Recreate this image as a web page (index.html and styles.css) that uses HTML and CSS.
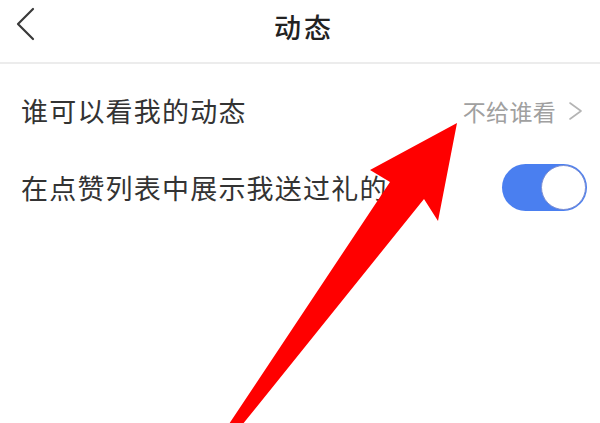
FILE: index.html
```html
<!DOCTYPE html>
<html lang="zh-CN">
<head>
<meta charset="utf-8">
<title>动态</title>
<link rel="stylesheet" href="styles.css">
</head>
<body>
<div class="page">
  <header class="topbar">
    <svg class="back" width="20" height="34" viewBox="0 0 20 34"><polyline points="17,2 2,17 17,32" fill="none" stroke="#3a3a3a" stroke-width="2.2" stroke-linecap="round" stroke-linejoin="round"/></svg>
    <h1 class="title">动态</h1>
  </header>
  <ul class="list">
    <li class="row">
      <span class="label">谁可以看我的动态</span>
      <span class="value">不给谁看
        <svg class="chev" width="16" height="20" viewBox="0 0 16 20"><polyline points="2,2 13,10 2,18" fill="none" stroke="#b4b4b4" stroke-width="1.6" stroke-linecap="round" stroke-linejoin="round"/></svg>
      </span>
    </li>
    <li class="row">
      <span class="label">在点赞列表中展示我送过礼的人</span>
      <span class="toggle"><span class="knob"></span></span>
    </li>
  </ul>
  <svg class="arrow" width="600" height="423" viewBox="0 0 600 423">
    <polygon points="457,123 438,221 424,199 238,430 225,430 390,182 370,170" fill="#ff0000"/>
  </svg>
</div>
</body>
</html>
```

FILE: styles.css
```css
html, body {
  margin: 0;
  padding: 0;
  background: #ffffff;
}
body {
  font-family: "Noto Sans CJK SC", "Noto Sans", sans-serif;
  color: #333333;
}
.page {
  position: relative;
  width: 600px;
  height: 423px;
  overflow: hidden;
}
.topbar {
  position: relative;
  height: 52px;
  padding-bottom: 10px;
  border-bottom: 2px solid #ececec;
  display: flex;
  align-items: center;
  justify-content: center;
}
.back {
  position: absolute;
  left: 16px;
  top: 7px;
}
.title {
  margin: 0;
  padding-left: 8px;
  font-size: 27px;
  font-weight: 500;
  color: #222222;
  letter-spacing: 3px;
}
.list {
  list-style: none;
  margin: 0;
  padding: 8px 0 0 0;
}
.row {
  height: 77px;
  display: flex;
  align-items: center;
  justify-content: space-between;
  padding: 0 13px 0 21px;
}
.label {
  font-size: 27px;
  letter-spacing: 1.2px;
  color: #333333;
}
.value {
  display: flex;
  align-items: center;
  gap: 12px;
  font-size: 23px;
  letter-spacing: 0.3px;
  color: #a0a0a0;
  padding-right: 3px;
}
.toggle {
  width: 85px;
  height: 47px;
  border-radius: 24px;
  background: #4a7ff0;
  display: flex;
  align-items: center;
  justify-content: flex-end;
  padding-right: 1px;
  box-sizing: border-box;
}
.knob {
  width: 45px;
  height: 45px;
  border-radius: 50%;
  background: #ffffff;
  border: 1.5px solid #7d8fd3;
  box-sizing: border-box;
}
.arrow {
  position: absolute;
  left: 0;
  top: 0;
  pointer-events: none;
}
```
